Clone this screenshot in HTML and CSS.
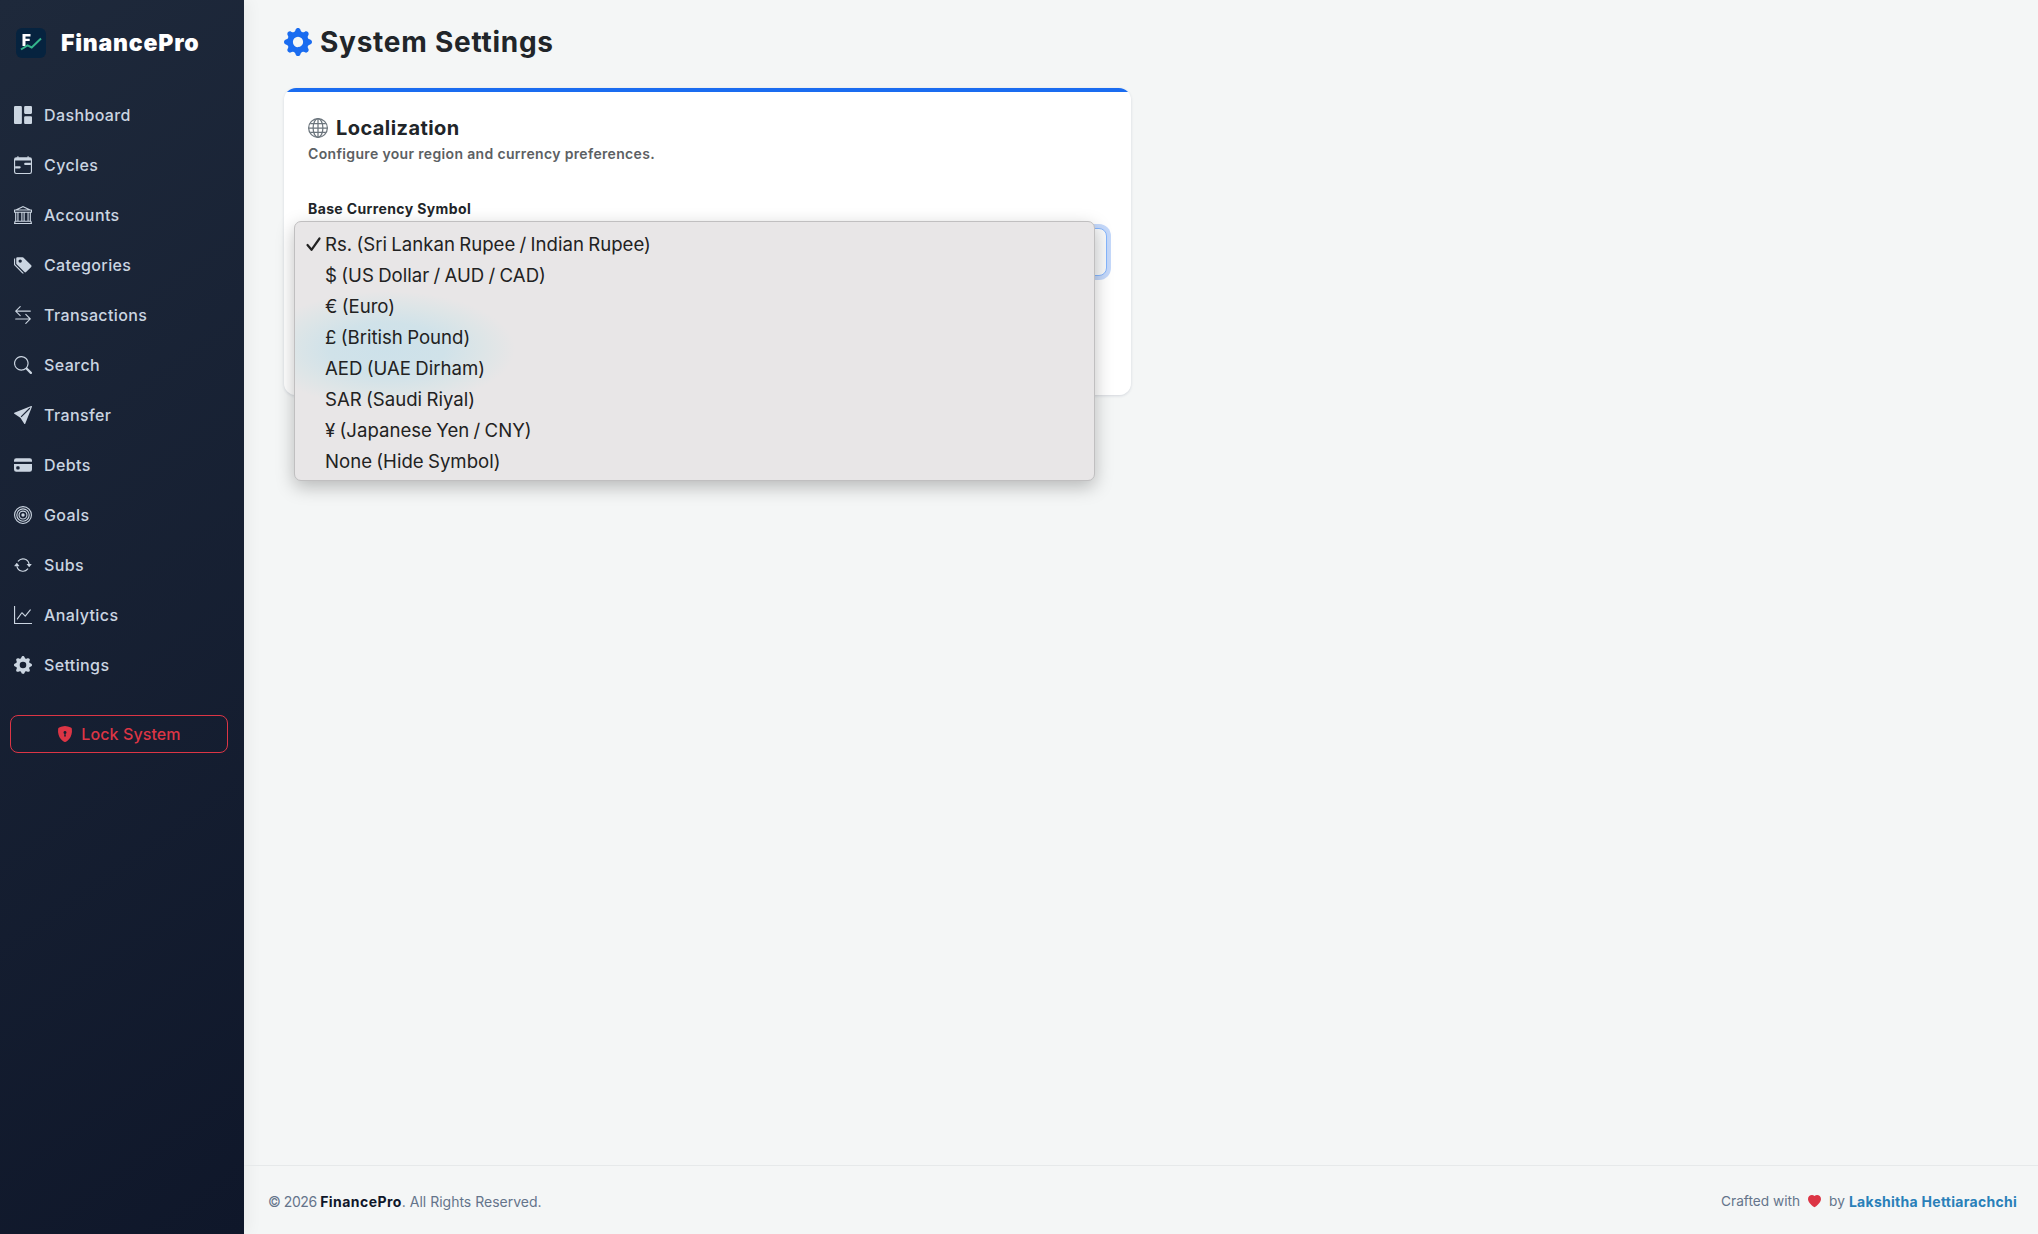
FILE: index.html
```html
<!DOCTYPE html>
<html lang="en">
<head>
    <meta charset="UTF-8">
    <meta name="viewport" content="width=device-width, initial-scale=1.0">
    <title>System Settings - FinancePro</title>
    <link rel="stylesheet" href="styles.css">
</head>
<body>

    <aside class="sidebar">
        <div class="brand">
            <svg class="brand-logo" viewBox="0 0 30 30">
                <rect width="30" height="30" rx="6" fill="#06233f"/>
                <path d="M6.5 6h8v2.4h-5v2.4h4.2v2.3H9.5v5h-3z" fill="#fff"/>
                <path d="M5 21.5l6.5-4.2 4.2 2.2L25 10.5" fill="none" stroke="#35b58c" stroke-width="2"/>
            </svg>
            <span class="brand-name">FinancePro</span>
        </div>

        <nav class="nav">
            <a href="#" class="nav-link">
                <svg class="icon" viewBox="0 0 16 16"><path d="M0 1a1 1 0 0 1 1-1h5a1 1 0 0 1 1 1v14a1 1 0 0 1-1 1H1a1 1 0 0 1-1-1zm9 0a1 1 0 0 1 1-1h5a1 1 0 0 1 1 1v5a1 1 0 0 1-1 1h-5a1 1 0 0 1-1-1zm0 9a1 1 0 0 1 1-1h5a1 1 0 0 1 1 1v5a1 1 0 0 1-1 1h-5a1 1 0 0 1-1-1z"/></svg>
                <span>Dashboard</span>
            </a>
            <a href="#" class="nav-link">
                <svg class="icon" viewBox="0 0 16 16"><path d="M9 7a1 1 0 0 1 1-1h5v2h-5a1 1 0 0 1-1-1M1 9h4a1 1 0 0 1 0 2H1z"/><path d="M3.5 0a.5.5 0 0 1 .5.5V1h8V.5a.5.5 0 0 1 1 0V1h1a2 2 0 0 1 2 2v11a2 2 0 0 1-2 2H2a2 2 0 0 1-2-2V3a2 2 0 0 1 2-2h1V.5a.5.5 0 0 1 .5-.5M1 4v10a1 1 0 0 0 1 1h12a1 1 0 0 0 1-1V4z"/></svg>
                <span>Cycles</span>
            </a>
            <a href="#" class="nav-link">
                <svg class="icon" viewBox="0 0 16 16"><path d="m8 0 6.61 3h.89a.5.5 0 0 1 .5.5v2a.5.5 0 0 1-.5.5H15v7a.5.5 0 0 1 .485.38l.5 2a.498.498 0 0 1-.485.62H.5a.498.498 0 0 1-.485-.62l.5-2A.5.5 0 0 1 1 13V6H.5a.5.5 0 0 1-.5-.5v-2A.5.5 0 0 1 .5 3h.89zM3.777 3h8.447L8 1zM2 6v7h1V6zm2 0v7h2.5V6zm3.5 0v7h1V6zm2 0v7H12V6zM13 6v7h1V6zm2-1V4H1v1zm-.39 9H1.39l-.25 1h13.72z"/></svg>
                <span>Accounts</span>
            </a>
            <a href="#" class="nav-link">
                <svg class="icon" viewBox="0 0 16 16"><path d="M2 2a1 1 0 0 1 1-1h4.586a1 1 0 0 1 .707.293l7 7a1 1 0 0 1 0 1.414l-4.586 4.586a1 1 0 0 1-1.414 0l-7-7A1 1 0 0 1 2 6.586zm3.5 4a1.5 1.5 0 1 0 0-3 1.5 1.5 0 0 0 0 3"/><path d="M1.293 7.793A1 1 0 0 1 1 7.086V2a1 1 0 0 0-1 1v4.586a1 1 0 0 0 .293.707l7 7a1 1 0 0 0 1.414 0l.043-.043z"/></svg>
                <span>Categories</span>
            </a>
            <a href="#" class="nav-link">
                <svg class="icon" viewBox="0 0 16 16"><path d="M1 11.5a.5.5 0 0 0 .5.5h11.793l-3.147 3.146a.5.5 0 0 0 .708.708l4-4a.5.5 0 0 0 0-.708l-4-4a.5.5 0 0 0-.708.708L13.293 11H1.5a.5.5 0 0 0-.5.5m14-7a.5.5 0 0 1-.5.5H2.707l3.147 3.146a.5.5 0 1 1-.708.708l-4-4a.5.5 0 0 1 0-.708l4-4a.5.5 0 1 1 .708.708L2.707 4H14.5a.5.5 0 0 1 .5.5"/></svg>
                <span>Transactions</span>
            </a>
            <a href="#" class="nav-link">
                <svg class="icon" viewBox="0 0 16 16"><path d="M11.742 10.344a6.5 6.5 0 1 0-1.397 1.398h-.001q.044.06.098.115l3.85 3.85a1 1 0 0 0 1.415-1.414l-3.85-3.85a1 1 0 0 0-.115-.1zM12 6.5a5.5 5.5 0 1 1-11 0 5.5 5.5 0 0 1 11 0"/></svg>
                <span>Search</span>
            </a>
            <a href="#" class="nav-link">
                <svg class="icon" viewBox="0 0 16 16"><path d="M15.964.686a.5.5 0 0 0-.65-.65L.767 5.855H.766l-.452.18a.5.5 0 0 0-.082.887l.41.26.001.002 4.995 3.178 3.178 4.995.002.002.26.41a.5.5 0 0 0 .886-.083zm-1.833 1.89L6.637 10.07l-.215-.338a.5.5 0 0 0-.154-.154l-.338-.215 7.494-7.494 1.178-.471z"/></svg>
                <span>Transfer</span>
            </a>
            <a href="#" class="nav-link">
                <svg class="icon" viewBox="0 0 16 16"><path d="M0 4a2 2 0 0 1 2-2h12a2 2 0 0 1 2 2v1H0zm0 3v5a2 2 0 0 0 2 2h12a2 2 0 0 0 2-2V7zm3 2h1a1 1 0 0 1 1 1v1a1 1 0 0 1-1 1H3a1 1 0 0 1-1-1v-1a1 1 0 0 1 1-1"/></svg>
                <span>Debts</span>
            </a>
            <a href="#" class="nav-link">
                <svg class="icon" viewBox="0 0 16 16"><path d="M8 15A7 7 0 1 1 8 1a7 7 0 0 1 0 14m0 1A8 8 0 1 0 8 0a8 8 0 0 0 0 16"/><path d="M8 13A5 5 0 1 1 8 3a5 5 0 0 1 0 10m0 1A6 6 0 1 0 8 2a6 6 0 0 0 0 12"/><path d="M8 11a3 3 0 1 1 0-6 3 3 0 0 1 0 6m0 1a4 4 0 1 0 0-8 4 4 0 0 0 0 8"/><path d="M9.5 8a1.5 1.5 0 1 1-3 0 1.5 1.5 0 0 1 3 0"/></svg>
                <span>Goals</span>
            </a>
            <a href="#" class="nav-link">
                <svg class="icon" viewBox="0 0 16 16"><path d="M11.534 7h3.932a.25.25 0 0 1 .192.41l-1.966 2.36a.25.25 0 0 1-.384 0l-1.966-2.36a.25.25 0 0 1 .192-.41m-11 2h3.932a.25.25 0 0 0 .192-.41L2.692 6.23a.25.25 0 0 0-.384 0L.342 8.59A.25.25 0 0 0 .534 9"/><path d="M8 3c-1.552 0-2.94.707-3.857 1.818a.5.5 0 1 1-.771-.636A6.002 6.002 0 0 1 13.917 7H12.9A5 5 0 0 0 8 3M3.1 9a5.002 5.002 0 0 0 8.757 2.182.5.5 0 1 1 .771.636A6.002 6.002 0 0 1 2.083 9z"/></svg>
                <span>Subs</span>
            </a>
            <a href="#" class="nav-link">
                <svg class="icon" viewBox="0 0 16 16"><path d="M0 0h1v15h15v1H0zm14.817 3.113a.5.5 0 0 1 .07.704l-4.5 5.5a.5.5 0 0 1-.74.037L7.06 6.767l-3.656 5.027a.5.5 0 0 1-.808-.588l4-5.5a.5.5 0 0 1 .758-.06l2.609 2.61 4.15-5.073a.5.5 0 0 1 .704-.07"/></svg>
                <span>Analytics</span>
            </a>
            <a href="#" class="nav-link">
                <svg class="icon" viewBox="0 0 16 16"><path d="M9.405 1.05c-.413-1.4-2.397-1.4-2.81 0l-.1.34a1.464 1.464 0 0 1-2.105.872l-.31-.17c-1.283-.698-2.686.705-1.987 1.987l.169.311c.446.82.023 1.841-.872 2.105l-.34.1c-1.4.413-1.4 2.397 0 2.81l.34.1a1.464 1.464 0 0 1 .872 2.105l-.17.31c-.698 1.283.705 2.686 1.987 1.987l.311-.169a1.464 1.464 0 0 1 2.105.872l.1.34c.413 1.4 2.397 1.4 2.81 0l.1-.34a1.464 1.464 0 0 1 2.105-.872l.31.17c1.283.698 2.686-.705 1.987-1.987l-.169-.311a1.464 1.464 0 0 1 .872-2.105l.34-.1c1.4-.413 1.4-2.397 0-2.81l-.34-.1a1.464 1.464 0 0 1-.872-2.105l.17-.31c.698-1.283-.705-2.686-1.987-1.987l-.311.169a1.464 1.464 0 0 1-2.105-.872zM8 10.93a2.929 2.929 0 1 1 0-5.86 2.929 2.929 0 0 1 0 5.858z"/></svg>
                <span>Settings</span>
            </a>
        </nav>

        <button class="lock-btn">
            <svg class="icon" viewBox="0 0 16 16"><path fill-rule="evenodd" d="M8 0c-.69 0-1.843.265-2.928.56-1.11.3-2.229.655-2.887.87a1.54 1.54 0 0 0-1.044 1.262c-.596 4.477.787 7.795 2.465 9.99a11.8 11.8 0 0 0 2.517 2.453c.386.273.744.482 1.048.625.28.132.581.24.829.24s.548-.108.829-.24a7 7 0 0 0 1.048-.625 11.8 11.8 0 0 0 2.517-2.453c1.678-2.195 3.061-5.513 2.465-9.99a1.54 1.54 0 0 0-1.044-1.263 63 63 0 0 0-2.887-.87C9.843.266 8.69 0 8 0m0 5a1.5 1.5 0 0 1 .5 2.915l.385 1.99a.5.5 0 0 1-.491.595h-.788a.5.5 0 0 1-.49-.595l.384-1.99A1.5 1.5 0 0 1 8 5"/></svg>
            <span>Lock System</span>
        </button>
    </aside>

    <div class="page">
        <main class="content">
            <h1 class="page-title">
                <svg class="icon" viewBox="0 0 16 16"><path d="M9.405 1.05c-.413-1.4-2.397-1.4-2.81 0l-.1.34a1.464 1.464 0 0 1-2.105.872l-.31-.17c-1.283-.698-2.686.705-1.987 1.987l.169.311c.446.82.023 1.841-.872 2.105l-.34.1c-1.4.413-1.4 2.397 0 2.81l.34.1a1.464 1.464 0 0 1 .872 2.105l-.17.31c-.698 1.283.705 2.686 1.987 1.987l.311-.169a1.464 1.464 0 0 1 2.105.872l.1.34c.413 1.4 2.397 1.4 2.81 0l.1-.34a1.464 1.464 0 0 1 2.105-.872l.31.17c1.283.698 2.686-.705 1.987-1.987l-.169-.311a1.464 1.464 0 0 1 .872-2.105l.34-.1c1.4-.413 1.4-2.397 0-2.81l-.34-.1a1.464 1.464 0 0 1-.872-2.105l.17-.31c.698-1.283-.705-2.686-1.987-1.987l-.311.169a1.464 1.464 0 0 1-2.105-.872zM8 10.93a2.929 2.929 0 1 1 0-5.86 2.929 2.929 0 0 1 0 5.858z"/></svg>
                <span>System Settings</span>
            </h1>

            <section class="card">
                <h2 class="card-title">
                    <svg class="globe" viewBox="0 0 16 16"><circle cx="8" cy="8" r="7.5"/><ellipse cx="8" cy="8" rx="3.9" ry="7.5"/><path d="M8 .5v15M.5 8h15M1.8 4.5h12.4M1.8 11.5h12.4"/></svg>
                    <span>Localization</span>
                </h2>
                <p class="card-text">Configure your region and currency preferences.</p>

                <div class="form-label">Base Currency Symbol</div>
                <div class="select">
                    <ul class="options">
                        <li class="option">
                            <svg class="check" viewBox="0 0 16 16"><path d="M2 9l4 4.8L14 2.5"/></svg>
                            Rs. (Sri Lankan Rupee / Indian Rupee)
                        </li>
                        <li class="option">$ (US Dollar / AUD / CAD)</li>
                        <li class="option">€ (Euro)</li>
                        <li class="option">£ (British Pound)</li>
                        <li class="option">AED (UAE Dirham)</li>
                        <li class="option">SAR (Saudi Riyal)</li>
                        <li class="option">¥ (Japanese Yen / CNY)</li>
                        <li class="option">None (Hide Symbol)</li>
                    </ul>
                </div>
            </section>
        </main>

        <footer class="footer">
            <div class="copyright"><span class="year">© 2026 </span><strong>FinancePro</strong>. All Rights Reserved.</div>
            <div class="credits">
                <span>Crafted with</span>
                <svg class="heart" viewBox="0 0 16 16"><path d="M8 1.314C12.438-3.248 23.534 4.735 8 15-7.534 4.736 3.562-3.248 8 1.314"/></svg>
                <span>by</span>
                <a href="#">Lakshitha Hettiarachchi</a>
            </div>
        </footer>
    </div>

</body>
</html>
```
FILE: styles.css
```css
:root {
    --sidebar-text: #cbd5e1;
    --primary: #1a6cf0;
    --danger: #dc3545;
    --text-dark: #212529;
    --text-muted: #64748b;
}

* {
    margin: 0;
    padding: 0;
    box-sizing: border-box;
}

body {
    font-family: Inter, sans-serif;
    background-color: #f4f6f6;
    color: var(--text-dark);
    display: flex;
    height: 100vh;
    overflow: hidden;
}

.icon {
    fill: currentColor;
    flex-shrink: 0;
}

/* --- Sidebar --- */
.sidebar {
    width: 244px;
    flex-shrink: 0;
    padding: 18px 16px 0 10px;
    background: linear-gradient(145deg, #1e293b 0%, #0f172a 100%);
    box-shadow: 4px 0 15px rgba(0, 0, 0, 0.05);
}

.brand {
    display: flex;
    align-items: center;
    height: 50px;
    padding-left: 6px;
}
.brand-logo {
    width: 30px;
    height: 30px;
    margin-right: 15px;
}
.brand-name {
    font-size: 23px;
    font-weight: 900;
    letter-spacing: 0.8px;
    color: #fff;
}

.nav {
    padding-top: 22px;
}
.nav-link {
    display: flex;
    align-items: center;
    gap: 12px;
    height: 50px;
    padding-left: 4px;
    color: var(--sidebar-text);
    font-size: 16px;
    font-weight: 550;
    letter-spacing: 0.38px;
    text-decoration: none;
}
.nav-link .icon {
    width: 18px;
    height: 18px;
}

.lock-btn {
    display: flex;
    align-items: center;
    justify-content: center;
    gap: 8px;
    width: 218px;
    height: 38px;
    margin-top: 25px;
    background: none;
    border: 1px solid var(--danger);
    border-radius: 8px;
    color: var(--danger);
    font-family: inherit;
    font-size: 16px;
    font-weight: 500;
    letter-spacing: 0.1px;
}
.lock-btn .icon {
    width: 16px;
    height: 16px;
}

/* --- Page --- */
.page {
    flex: 1;
    display: flex;
    flex-direction: column;
}
.content {
    flex: 1;
    padding: 22px 40px 0;
}

.page-title {
    display: flex;
    align-items: center;
    gap: 8px;
    height: 40px;
    font-size: 28px;
    font-weight: 700;
    letter-spacing: 0.74px;
}
.page-title .icon {
    width: 28px;
    height: 28px;
    color: var(--primary);
}

/* --- Card --- */
.card {
    width: 847px;
    height: 307px;
    margin-top: 26px;
    padding: 27px 24px 24px;
    background: linear-gradient(var(--primary) 4px, #fff 4px);
    border-radius: 12px;
    box-shadow: 0 1px 3px rgba(30, 41, 80, 0.15);
}
.card-title {
    display: flex;
    align-items: center;
    gap: 8px;
    height: 26px;
    font-size: 20px;
    font-weight: 700;
    letter-spacing: 0.42px;
}
.globe {
    width: 20px;
    height: 20px;
    fill: none;
    stroke: #6c757d;
    stroke-width: 1;
}
.card-text {
    margin-top: 2px;
    line-height: 22px;
    font-size: 14px;
    font-weight: 600;
    letter-spacing: 0.34px;
    color: #5c6063;
}
.form-label {
    margin-top: 33px;
    line-height: 22px;
    font-size: 14px;
    font-weight: 700;
    letter-spacing: 0.38px;
}

/* --- Currency select with its open list --- */
.select {
    position: relative;
    height: 48px;
    margin-top: 8px;
    background-color: #f8f9fa;
    border: 1px solid #86b7fe;
    border-radius: 8px;
    box-shadow: 0 0 0 4px #c5d9fb;
}
.options {
    position: absolute;
    top: -8px;
    left: -15px;
    width: 801px;
    padding: 7px 0 3px;
    list-style: none;
    background: radial-gradient(ellipse 128px 58px at 92px 127px, #cde1ea 0%, #d0e2e9 45%, #dde5e7 75%, rgba(232, 230, 231, 0) 100%) #e8e6e7;
    border: 1px solid #c0bfc0;
    border-radius: 7px;
    box-shadow: 0 6px 18px rgba(0, 0, 0, 0.25);
}
.option {
    position: relative;
    height: 31px;
    padding-left: 30px;
    line-height: 30px;
    font-size: 18.6px;
    word-spacing: -0.9px;
    color: #222;
}
.check {
    position: absolute;
    left: 10px;
    top: 7px;
    width: 17px;
    height: 16px;
    fill: none;
    stroke: #222;
    stroke-width: 2.2;
    stroke-linecap: round;
    stroke-linejoin: round;
}

/* --- Footer --- */
.footer {
    display: flex;
    justify-content: space-between;
    align-items: center;
    height: 69px;
    padding: 2px 21px 0 24px;
    border-top: 1px solid #e6e9ea;
    font-size: 14px;
    color: var(--text-muted);
}
.year {
    letter-spacing: -0.45px;
}
.copyright strong {
    color: #0f172a;
    letter-spacing: 0.45px;
}
.credits {
    display: flex;
    align-items: center;
    font-size: 13.7px;
}
.credits a {
    margin-left: 4px;
    font-size: 14px;
    font-weight: 700;
    letter-spacing: 0.28px;
    color: #2980b9;
    text-decoration: none;
}
.heart {
    width: 13px;
    height: 13px;
    margin: 0 8px;
    fill: var(--danger);
}
```
